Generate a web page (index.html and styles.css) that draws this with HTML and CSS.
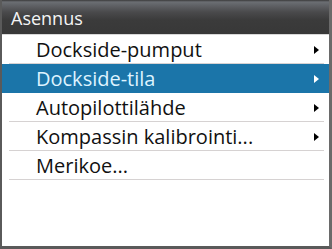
FILE: index.html
```html
<!DOCTYPE html>
<html>
<head>
<meta charset="utf-8">
<link rel="stylesheet" href="styles.css">
</head>
<body>
<div class="frame">
  <div class="title">Asennus</div>
  <ul class="menu">
    <li class="item"><span class="label">Dockside-pumput</span><span class="chev"></span></li>
    <li class="item active"><span class="label">Dockside-tila</span><span class="chev"></span></li>
    <li class="item"><span class="label">Autopilottilähde</span><span class="chev"></span></li>
    <li class="item"><span class="label">Kompassin kalibrointi...</span><span class="chev"></span></li>
    <li class="item"><span class="label">Merikoe...</span></li>
  </ul>
</div>
</body>
</html>
```

FILE: styles.css
```css
html, body {
  margin: 0;
  padding: 0;
  background: #ffffff;
}
.frame {
  width: 332px;
  height: 249px;
  box-sizing: border-box;
  border-left: 2px solid #5a5a5a;
  border-right: 3px solid #6a6a6a;
  border-bottom: 3px solid #5a5a5a;
  background: #ffffff;
  font-family: "Open Sans", "Noto Sans", sans-serif;
  font-stretch: 88%;
  overflow: hidden;
}
.title {
  height: 35px;
  box-sizing: border-box;
  margin-left: -2px;
  margin-right: -3px;
  padding-left: 11px;
  background: linear-gradient(to bottom, #3a3a3a 0px, #6b6e73 2px, #4a4a4c 12px, #3b3b3b 20px, #383838 100%);
  border-bottom: 1px solid #d8d8d8;
  color: #f4f4f4;
  font-size: 18px;
  font-stretch: 90%;
  line-height: 36px;
}
.menu {
  list-style: none;
  margin: 0;
  padding: 0;
}
.item {
  position: relative;
  height: 29px;
  display: flex;
  align-items: center;
  justify-content: space-between;
  padding-left: 34px;
  padding-right: 10px;
  color: #111111;
  font-size: 20px;
  font-weight: 500;
}
.item::after {
  content: "";
  position: absolute;
  left: 7px;
  right: 5px;
  bottom: 0;
  height: 1px;
  background: #d6d2d2;
}
.item.active {
  background: #1b75a9;
  color: #def3ff;
}
.item.active::after {
  display: none;
}
.chev {
  width: 0;
  height: 0;
  border-top: 4px solid transparent;
  border-bottom: 4px solid transparent;
  border-left: 5px solid #000000;
}
.active .chev {
  border-left-color: #ffffff;
}
```
